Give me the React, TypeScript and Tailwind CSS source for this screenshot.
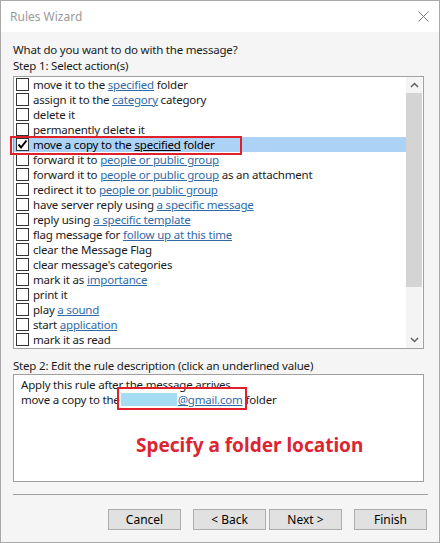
import React from 'react';

type Part = { t: string; link?: boolean };

const rows: { parts: Part[]; checked?: boolean }[] = [
  { parts: [{ t: 'move it to the ' }, { t: 'specified', link: true }, { t: ' folder' }] },
  { parts: [{ t: 'assign it to the ' }, { t: 'category', link: true }, { t: ' category' }] },
  { parts: [{ t: 'delete it' }] },
  { parts: [{ t: 'permanently delete it' }] },
  { parts: [{ t: 'move a copy to the ' }, { t: 'specified', link: true }, { t: ' folder' }], checked: true },
  { parts: [{ t: 'forward it to ' }, { t: 'people or public group', link: true }] },
  { parts: [{ t: 'forward it to ' }, { t: 'people or public group', link: true }, { t: ' as an attachment' }] },
  { parts: [{ t: 'redirect it to ' }, { t: 'people or public group', link: true }] },
  { parts: [{ t: 'have server reply using ' }, { t: 'a specific message', link: true }] },
  { parts: [{ t: 'reply using ' }, { t: 'a specific template', link: true }] },
  { parts: [{ t: 'flag message for ' }, { t: 'follow up at this time', link: true }] },
  { parts: [{ t: 'clear the Message Flag' }] },
  { parts: [{ t: "clear message's categories" }] },
  { parts: [{ t: 'mark it as ' }, { t: 'importance', link: true }] },
  { parts: [{ t: 'print it' }] },
  { parts: [{ t: 'play ' }, { t: 'a sound', link: true }] },
  { parts: [{ t: 'start ' }, { t: 'application', link: true }] },
  { parts: [{ t: 'mark it as read' }] },
];

const Checkbox = ({ checked }: { checked?: boolean }) => (
  <span className="w-[13px] h-[13px] border border-[#333] bg-white flex items-center justify-center shrink-0">
    {checked && (
      <svg width="11" height="11" viewBox="0 0 11 11">
        <path d="M1.5 5.5 L4 8.5 L9.5 1.5" fill="none" stroke="#000" strokeWidth="2" />
      </svg>
    )}
  </span>
);

const Btn = ({ label }: { label: string }) => (
  <button className="w-[73px] h-[21px] border border-[#adadad] bg-[#e1e1e1] text-[12px] text-black leading-none">
    {label}
  </button>
);

export default function App() {
  return (
    <div
      className="w-[440px] h-[543px] border border-[#a9a9a9] bg-[#f5f5f5] flex flex-col text-[11.5px] tracking-[-0.2px] text-[#1a1a1a]"
      style={{ fontFamily: '"Noto Sans", "Liberation Sans", sans-serif' }}
    >
      {/* title bar */}
      <div className="h-[31px] bg-white flex items-center justify-between pl-[9px] pr-[10px] shrink-0">
        <span className="text-[12px] tracking-normal text-[#9a9a9a]">Rules Wizard</span>
        <svg width="11" height="11" viewBox="0 0 11 11">
          <path d="M0.5 0.5 L10.5 10.5 M10.5 0.5 L0.5 10.5" stroke="#7a7a7a" strokeWidth="1" />
        </svg>
      </div>

      <div className="flex flex-col pl-[12px] pr-[11px] pt-[10px]">
        <div className="leading-[15px] h-[16px]">What do you want to do with the message?</div>
        <div className="leading-[15px] h-[16px]">Step 1: Select action(s)</div>

        {/* action list */}
        <div className="relative mt-[2px] w-[411px] h-[273px] border border-[#a0a0a0] bg-white flex">
          <div className="flex-1 flex flex-col">
            {rows.map((r, i) => (
              <div
                key={i}
                className={
                  'h-[15px] flex items-center gap-[4px] pl-[2px] whitespace-nowrap ' +
                  (r.checked ? 'bg-[#acd3f6] text-black' : '')
                }
              >
                <Checkbox checked={r.checked} />
                <span className="leading-[15px]">
                  {r.parts.map((p, j) =>
                    p.link ? (
                      <span
                        key={j}
                        className={r.checked ? 'underline text-black' : 'underline text-[#2f6aa7]'}
                      >
                        {p.t}
                      </span>
                    ) : (
                      <span key={j}>{p.t}</span>
                    )
                  )}
                </span>
              </div>
            ))}
          </div>
          {/* scrollbar */}
          <div className="w-[16px] mr-[1px] bg-[#f4f4f4] flex flex-col">
            <div className="h-[16px] flex items-center justify-center">
              <svg width="9" height="6" viewBox="0 0 9 6">
                <path d="M1 5 L4.5 1.5 L8 5" fill="none" stroke="#606060" strokeWidth="1.5" />
              </svg>
            </div>
            <div className="h-[194px] bg-[#d4d4d4]" />
            <div className="flex-1" />
            <div className="h-[16px] flex items-center justify-center">
              <svg width="9" height="6" viewBox="0 0 9 6">
                <path d="M1 1 L4.5 4.5 L8 1" fill="none" stroke="#606060" strokeWidth="1.5" />
              </svg>
            </div>
          </div>
          {/* red highlight box */}
          <div className="absolute left-[-4px] top-[59px] w-[232px] h-[19px] border-2 border-[#e0202a] pointer-events-none" />
        </div>

        <div className="leading-[15px] h-[15px] mt-[9px]">Step 2: Edit the rule description (click an underlined value)</div>

        {/* description */}
        <div className="relative mt-[1px] w-[411px] h-[108px] border border-[#a0a0a0] bg-white flex flex-col pl-[7px] pt-[2px]">
          <div className="leading-[15px]">Apply this rule after the message arrives</div>
          <div className="leading-[15px] flex items-center whitespace-nowrap">
            <span>move a copy to the</span>
            <span className="w-[56px] h-[13px] bg-[#a6dcf2] ml-[1px]" />
            <span className="underline text-[#2f6aa7] ml-[1px]">@gmail.com</span>
            <span className="ml-[3px]">folder</span>
          </div>
          <div className="mt-[26px] pl-[115px] text-[19px] tracking-normal font-bold text-[#dc2531] leading-[24px]">
            Specify a folder location
          </div>
          <div className="absolute left-[103px] top-[12px] w-[130px] h-[23px] border-2 border-[#e0202a] pointer-events-none" />
        </div>

        <div className="mt-[12px] h-px bg-[#a0a0a0] w-[415px]" />

        <div className="mt-[14px] flex justify-end pr-[1px] w-[415px] tracking-normal">
          <Btn label="Cancel" />
          <div className="ml-[12px] flex gap-[3px]">
            <Btn label="< Back" />
            <Btn label="Next >" />
          </div>
          <div className="ml-[12px]">
            <Btn label="Finish" />
          </div>
        </div>
      </div>
    </div>
  );
}
